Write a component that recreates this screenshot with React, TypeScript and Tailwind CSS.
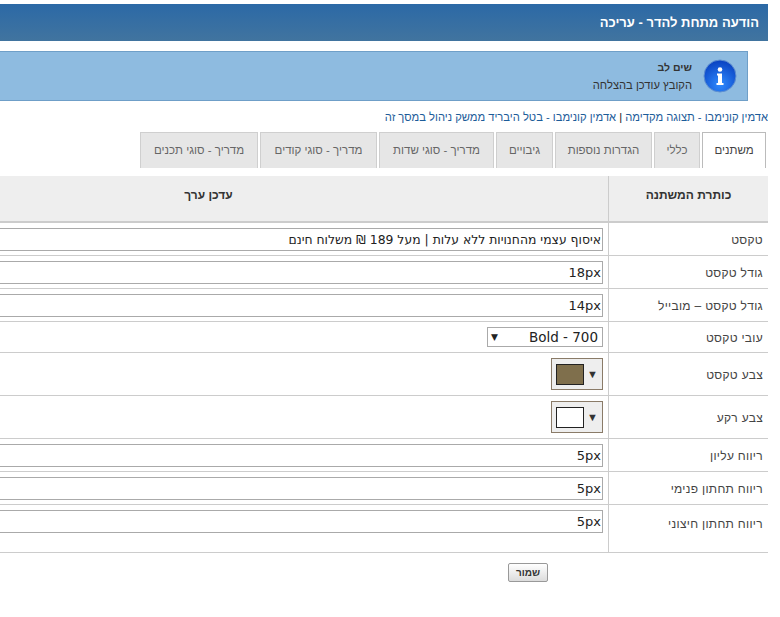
import React from 'react';

const tabs = [
  { label: 'משתנים', width: 'w-[64px]' },
  { label: 'כללי', width: 'w-[46px]' },
  { label: 'הגדרות נוספות', width: 'w-[97px]' },
  { label: 'גיבויים', width: 'w-[57px]' },
  { label: 'מדריך - סוגי שדות', width: 'w-[115px]' },
  { label: 'מדריך - סוגי קודים', width: 'w-[117px]' },
  { label: 'מדריך - סוגי תכנים', width: 'w-[118px]' },
];

function TextField({ value, small }: { value: string; small?: boolean }) {
  return (
    <input
      readOnly
      value={value}
      dir="rtl"
      className={`block w-[790px] h-[23px] mr-[5px] border border-[#aaa] bg-white px-[1px] text-[#222] outline-none font-['DejaVu_Sans',sans-serif] ${small ? 'text-[12.4px]' : 'text-[13px]'}`}
    />
  );
}

function ColorPick({ color }: { color: string }) {
  return (
    <div className="mr-[5px] w-[52px] h-[32px] border border-[#8a7b68] bg-[#eeeeee] flex flex-row-reverse items-center justify-between pl-[4px] pr-[4px]">
      <div className="w-[28px] h-[21px] border border-[#222]" style={{ backgroundColor: color }} />
      <span className="w-[10px] text-center text-[11px] leading-none text-[#333]">▼</span>
    </div>
  );
}

function Row({ label, h, children, top }: { label: string; h: string; children: React.ReactNode; top?: boolean }) {
  return (
    <div className={`flex ${h} border-b border-[#cccccc]`}>
      <div className={`w-[159px] shrink-0 pr-[5px] flex text-[12px] tracking-[0.3px] text-[#444] ${top ? 'items-start pt-[10px]' : 'items-center pt-[1px]'}`}>{label}</div>
      <div className="w-[800px] shrink-0 border-r border-[#cccccc] pt-[5px]">{children}</div>
    </div>
  );
}

export default function App() {
  return (
    <div className="w-[780px] h-[617px] bg-white overflow-hidden font-['Liberation_Sans',Arial,sans-serif]">
      <div dir="rtl" className="w-[768px] overflow-hidden">
        {/* Title bar */}
        <div className="mt-[4px] h-[37px] bg-gradient-to-b from-[#2b69a6] to-[#41749f] flex items-center pr-[9px] text-[13px] font-bold text-white">
          הודעה מתחת להדר - עריכה
        </div>

        {/* Notice */}
        <div className="mt-[10px] mr-[20px] h-[50px] bg-[#8ebbe0] border border-[#6f9fc8] border-l-0 flex items-center pr-[10px]">
          <svg width="34" height="34" viewBox="0 0 34 34" className="shrink-0">
            <defs>
              <radialGradient id="infoFill" cx="50%" cy="75%" r="70%">
                <stop offset="0%" stopColor="#2f8bff" />
                <stop offset="100%" stopColor="#0b45c4" />
              </radialGradient>
            </defs>
            <circle cx="17" cy="17" r="16" fill="url(#infoFill)" stroke="#5f8fd0" />
            <circle cx="17" cy="10.5" r="2.3" fill="#fff" />
            <path d="M14 14.5h5v9.5h1.5v2h-7v-2H15v-7.5h-1z" fill="#fff" />
          </svg>
          <div className="mr-[11px] text-[#333]">
            <div className="text-[10.5px] font-bold leading-[14px]">שים לב</div>
            <div className="mt-[3px] text-[11.2px] leading-[16px]">הקובץ עודכן בהצלחה</div>
          </div>
        </div>

        {/* Links */}
        <div className="mt-[8px] h-[16px] text-[11.2px] leading-[16px] text-[#1c5c99] whitespace-nowrap">
          אדמין קונימבו - תצוגה מקדימה <span className="text-[#222]">|</span> אדמין קונימבו - בטל היבריד ממשק ניהול במסך זה
        </div>

        {/* Tabs */}
        <div className="mt-[7px] mr-[2px] flex gap-[2px] h-[36px]">
          {tabs.map((t, i) => (
            <div
              key={t.label}
              className={`${t.width} flex items-center justify-center text-[11.5px] whitespace-nowrap border border-b-0 ${
                i === 0 ? 'text-[#444] bg-white border-[#bbb]' : 'text-[#666] bg-[#e6e6e6] border-[#cfcfcf]'
              }`}
            >
              {t.label}
            </div>
          ))}
        </div>

        {/* Table */}
        <div className="mt-[8px] w-[960px]">
          <div className="flex h-[47px] bg-[#eeeeee] border-b-2 border-[#cccccc] text-[12px] font-bold text-[#333]">
            <div className="w-[159px] shrink-0 text-center pt-[10px]">כותרת המשתנה</div>
            <div className="w-[800px] shrink-0 border-r border-[#cccccc] text-center pt-[10px]">עדכן ערך</div>
          </div>
          <Row label="טקסט" h="h-[33px]"><TextField small value="איסוף עצמי מהחנויות ללא עלות | מעל 189 ₪ משלוח חינם" /></Row>
          <Row label="גודל טקסט" h="h-[33px]"><TextField value="18px" /></Row>
          <Row label="גודל טקסט – מובייל" h="h-[33px]"><TextField value="14px" /></Row>
          <Row label="עובי טקסט" h="h-[31px]">
            <div className="mr-[5px] w-[116px] h-[20px] border border-[#aaa] bg-white flex items-center justify-between pl-[3px] pr-[4px] text-[13.5px] text-[#222] font-['DejaVu_Sans',sans-serif]">
              <span dir="ltr">Bold - 700</span>
              <span className="text-[9px] leading-none">▼</span>
            </div>
          </Row>
          <Row label="צבע טקסט" h="h-[43px]"><ColorPick color="#7f6f4c" /></Row>
          <Row label="צבע רקע" h="h-[43px]"><ColorPick color="#ffffff" /></Row>
          <Row label="ריווח עליון" h="h-[33px]"><TextField value="5px" /></Row>
          <Row label="ריווח תחתון פנימי" h="h-[33px]"><TextField value="5px" /></Row>
          <Row label="ריווח תחתון חיצוני" h="h-[48px]" top><TextField value="5px" /></Row>
        </div>

        {/* Save */}
        <div className="mt-[10px] mr-[220px] flex">
          <button className="w-[40px] h-[19px] border border-[#999] rounded-[2px] bg-gradient-to-b from-white to-[#dcdcdc] text-[10px] font-bold leading-none text-[#333]">
            שמור
          </button>
        </div>
      </div>
    </div>
  );
}
